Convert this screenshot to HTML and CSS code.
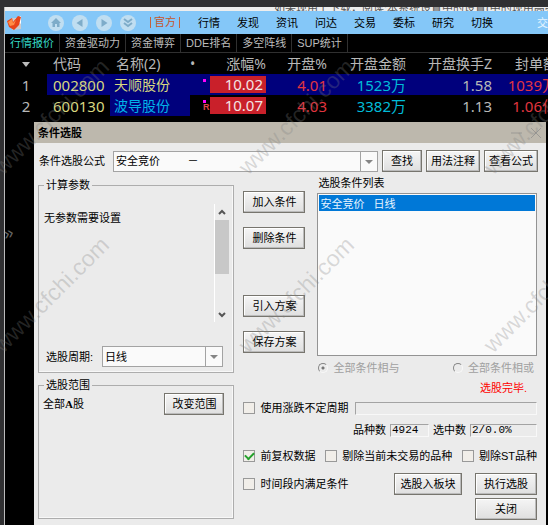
FILE: index.html
```html
<!DOCTYPE html>
<html lang="zh-CN">
<head>
<meta charset="utf-8">
<meta name="viewport" content="width=device-width, initial-scale=1">
<title>条件选股</title>
<link rel="stylesheet" href="styles.css">
</head>
<body>
<main class="app">
  <div class="notice">如果现用上下载，阅读:本系统设置中的设置(中的现用高亮显示)即能</div>

  <header class="toolbar">
    <svg class="logo" viewBox="0 0 15 16" aria-hidden="true">
      <path d="M4 3h10v11l-9 1z" fill="#cfc9ca"/>
      <path d="M8 4l6-3v8z" fill="#fff"/>
      <path d="M0 6l5-3 1 4 5-6 3 1-2 8-5 5-5-3z" fill="#e8441a"/>
      <path d="M1 7l4-3 1 4 3-3-2 5-4 1z" fill="#ff8c45"/>
    </svg>
    <nav class="round-buttons">
      <button type="button" aria-label="首页"><svg viewBox="0 0 16 16"><path d="M3 8l5-5 5 5h-1.500v4h-2.500v-3h-2v3H4.500V8z" fill="#7eacc9"/></svg></button>
      <button type="button" aria-label="后退"><svg viewBox="0 0 16 16"><path d="M10.500 4v8L4.500 8z" fill="#7eacc9"/></svg></button>
      <button type="button" aria-label="前进"><svg viewBox="0 0 16 16"><path d="M5.500 4v8l6-4z" fill="#7eacc9"/></svg></button>
      <button type="button" aria-label="更多"><svg viewBox="0 0 16 16"><path d="M4 4l4 3 4-3M4 8l4 3 4-3" fill="none" stroke="#7eacc9" stroke-width="2"/></svg></button>
    </nav>
    <a class="official" href="#">官方</a>
    <nav class="menu">
      <a href="#">行情</a><a href="#">发现</a><a href="#">资讯</a><a href="#">问达</a><a href="#">交易</a><a href="#">委标</a><a href="#">研究</a><a href="#">切换</a>
    </nav>
    <span class="trade">交</span>
  </header>

  <nav class="tabs">
    <a class="active" href="#">行情报价</a><a href="#">资金驱动力</a><a href="#">资金博弈</a><a href="#">DDE排名</a><a href="#">多空阵线</a><a href="#">SUP统计</a>
  </nav>

  <div class="quotes-wrap">
    <table class="quotes">
      <colgroup><col class="c-index"><col class="c-code"><col class="c-name"><col class="c-mark"><col class="c-rise"><col class="c-open"><col class="c-amount"><col class="c-turn"><col class="c-seal"></colgroup>
      <thead>
        <tr><th class="center"><span class="triangle"></span></th><th class="left">代码</th><th class="left">名称(2)</th><th class="bullet">•</th><th>涨幅%</th><th>开盘%</th><th>开盘金额</th><th>开盘换手Z</th><th>封单额</th></tr>
      </thead>
      <tbody>
        <tr class="selected"><td class="index">1</td><td class="code">002800</td><td class="name">天顺股份</td><td class="mark"><i class="dot"></i></td><td class="rise"><span>10.02</span></td><td class="up">4.01</td><td class="amount">1523万</td><td>1.58</td><td class="up">1039万</td></tr>
        <tr><td class="index">2</td><td class="code">600130</td><td class="name marked">波导股份</td><td class="mark"><i class="dot"></i><b>R</b></td><td class="rise"><span>10.07</span></td><td class="up">4.03</td><td class="amount">3382万</td><td>1.13</td><td class="up">1.06亿</td></tr>
      </tbody>
    </table>
  </div>

  <section class="dialog" role="dialog" aria-labelledby="dialog-title">
    <div class="titlebar">
      <h1 id="dialog-title">条件选股</h1>
      <svg class="window-controls" viewBox="0 0 30 12" aria-hidden="true"><path d="M0 6h11M20 1l10 10M30 1l-10 10" fill="none" stroke="#9b9994"/></svg>
    </div>
    <form class="content">
      <div class="formula">
        <label for="formula">条件选股公式</label>
        <span class="select"><select id="formula"><option>安全竞价 &nbsp; &nbsp; &nbsp; &nbsp; －</option></select></span>
        <button class="btn" type="button">查找</button>
        <button class="btn" type="button">用法注释</button>
        <button class="btn" type="button">查看公式</button>
      </div>

      <div class="columns">
        <div class="left-column">
          <fieldset class="params">
            <legend>计算参数</legend>
            <div class="param-list">
              <p>无参数需要设置</p>
              <div class="scrollbar" aria-hidden="true">
                <svg viewBox="0 0 14 16"><path d="M4 10l3-3 3 3" fill="none" stroke="#555" stroke-width="2"/></svg>
                <span class="thumb"></span>
                <svg class="down" viewBox="0 0 14 16"><path d="M4 7l3 3 3-3" fill="none" stroke="#555" stroke-width="2"/></svg>
              </div>
            </div>
            <div class="period">
              <label for="period">选股周期:</label>
              <span class="select"><select id="period"><option>日线</option></select></span>
            </div>
          </fieldset>
          <fieldset class="range">
            <legend>选股范围</legend>
            <div class="range-row">
              <span>全部<b>A</b>股</span>
              <button class="btn" type="button">改变范围</button>
            </div>
          </fieldset>
        </div>

        <div class="right-column">
          <div class="conditions">
            <div class="actions">
              <button class="btn" type="button">加入条件</button>
              <button class="btn" type="button">删除条件</button>
              <button class="btn second-group" type="button">引入方案</button>
              <button class="btn" type="button">保存方案</button>
            </div>
            <div class="list-side">
              <label for="conditions">选股条件列表</label>
              <select id="conditions" size="8"><option class="chosen">安全竞价 &nbsp; 日线</option></select>
              <div class="radios">
                <label><input type="radio" name="join" checked disabled>全部条件相与</label>
                <label><input type="radio" name="join" disabled>全部条件相或</label>
              </div>
              <p class="status">选股完毕.</p>
            </div>
          </div>

          <div class="row uncertain">
            <label><input type="checkbox">使用涨跌不定周期</label>
            <input class="sunken" type="text" aria-label="不定周期" readonly>
          </div>
          <div class="row counts">
            <label for="total">品种数</label><input id="total" class="sunken total" type="text" value="4924" readonly>
            <label for="hits">选中数</label><input id="hits" class="sunken hits" type="text" value="2/0.0%" readonly>
          </div>
          <div class="row filters">
            <label><input type="checkbox" checked>前复权数据</label>
            <label><input type="checkbox">剔除当前未交易的品种</label>
            <label><input type="checkbox">剔除ST品种</label>
          </div>
          <div class="row run">
            <label><input type="checkbox">时间段内满足条件</label>
            <button class="btn to-block" type="button">选股入板块</button>
            <button class="btn wide" type="button">执行选股</button>
          </div>
          <div class="row close"><button class="btn wide" type="button">关闭</button></div>
        </div>
      </div>
    </form>
  </section>
</main>

<svg class="watermarks" aria-hidden="true">
  <g>
    <text transform="translate(3 176) rotate(-45)">www.cfchi.com</text>
    <text transform="translate(248 176) rotate(-45)">www.cfchi.com</text>
    <text transform="translate(493 176) rotate(-45)">www.cfchi.com</text>
    <text transform="translate(3 354) rotate(-45)">www.cfchi.com</text>
    <text transform="translate(248 354) rotate(-45)">www.cfchi.com</text>
    <text transform="translate(493 354) rotate(-45)">www.cfchi.com</text>
    <text class="chevrons" transform="translate(5 240) rotate(-15)">»</text>
  </g>
</svg>
</body>
</html>
```
FILE: styles.css
```css
* { box-sizing: border-box; }

body {
  margin: 0;
  padding: 7px 0 0 4px;
  min-height: 100vh;
  display: flex;
  background: #303032;
  font: 11px/14px "Liberation Sans", "Noto Sans CJK SC", sans-serif;
  color: #000;
  overflow: hidden;
}

button, input, select { font: inherit; color: inherit; }
a { color: inherit; text-decoration: none; white-space: nowrap; }
h1, p { margin: 0; }

.app {
  flex: 1;
  min-width: 0;
  display: flex;
  flex-direction: column;
  background: #000;
  border-left: 1px solid #bbb;
}

.notice {
  height: 4px;
  overflow: hidden;
  background: #ededed;
  color: #555;
  padding-left: 269px;
  line-height: 2px;
  white-space: nowrap;
}

/* Toolbar */
.toolbar {
  display: flex;
  align-items: center;
  height: 23px;
  background: #84c7f8;
  padding-left: 2px;
  overflow: hidden;
}
.logo { width: 15px; height: 16px; flex: none; }
.round-buttons { display: flex; gap: 8px; margin-left: 26px; }
.round-buttons button {
  width: 16px;
  height: 16px;
  padding: 0;
  border: 0;
  border-radius: 50%;
  background: #c0def1;
}
.round-buttons svg { display: block; }
.official {
  margin-left: 14px;
  padding: 0 3px;
  border: solid #c4633c;
  border-width: 0 1px;
  color: #c4562c;
  line-height: 11px;
}
.menu { display: flex; flex: 1; gap: 17px; margin-left: 18px; }
.trade { flex: none; width: 11px; color: #e6f5ff; }

/* Tabs */
.tabs {
  display: flex;
  height: 19px;
  border-bottom: 1px solid #303030;
  color: #bcbcbc;
  line-height: 18px;
}
.tabs a { padding: 0 5px; border-right: 1px solid #303030; }
.tabs .active { color: #35d9c6; }

/* Quotes */
.quotes-wrap { overflow: hidden; }
.quotes {
  width: calc(100% + 9px);
  table-layout: fixed;
  border-collapse: collapse;
  font: 15px/20px "Noto Sans", "Noto Sans CJK SC", sans-serif;
  color: #b8b8b8;
}
.quotes th, .quotes td { height: 21px; padding: 0; text-align: right; font-weight: 400; white-space: nowrap; }
.quotes th { font-size: 14px; }
.quotes .center, .quotes .index { text-align: center; }
.quotes .left, .quotes .code { text-align: left; padding-left: 6px; }
.quotes .bullet { text-align: left; }
.c-index { width: 42px; }
.c-code { width: 63px; }
.c-name { width: 80px; }
.c-mark { width: 20px; }
.c-rise { width: 56px; }
.c-open { width: 61px; }
.c-amount { width: 79px; }
.c-turn { width: 86px; }
.triangle { display: inline-block; border: 4px solid transparent; border-top: 5px solid #bbb; border-bottom: 0; vertical-align: middle; }
.quotes .code { color: #d8d880; }
.quotes .name { text-align: left; padding-left: 4px; font-size: 14px; color: #d8d880; }
.quotes .marked { background: #00007c; color: #00b4e8; }
.selected td:not(.index) { background: #00007c; }
.quotes .up { color: #e0353f; }
.quotes .amount { color: #00bcd8; }
.rise span { display: block; height: 17px; padding-right: 3px; background: #c9202a; color: #f4e4e4; line-height: 17px; }
.mark .dot { display: block; width: 3px; height: 3px; margin-left: 13px; background: #f0f; }
.mark b { display: block; padding-left: 13px; text-align: left; color: #e0484d; font: bold 9px/8px "Liberation Sans", sans-serif; }
.selected .mark .dot { margin-bottom: 8px; }

/* Dialog */
.dialog { flex: 1; margin: 6px 2px 0 29px; background: #ebebeb; }
.titlebar {
  display: flex;
  align-items: center;
  justify-content: space-between;
  height: 21px;
  padding: 0 5px 0 4px;
  background: #bdb8ad;
}
.titlebar h1 { font-size: 11px; line-height: 14px; }
.window-controls { width: 30px; height: 12px; }
.content { padding: 0 8px 7px 4px; }

.btn {
  height: 22px;
  padding: 0 3px;
  border: 1px solid #77756e;
  background: linear-gradient(#f5f5f5, #dfdfdf);
  box-shadow: inset -1px -1px #bbb, inset 1px 1px #fff;
  white-space: nowrap;
}
.formula { display: flex; align-items: center; gap: 4px; height: 35px; padding: 1px 0 0 1px; }
.formula label { flex: none; width: 70px; }
.formula .select { flex: 1; }
.formula .btn { width: 54px; }
.formula .select + .btn { width: 40px; }

.select { position: relative; display: block; height: 21px; }
.select select {
  width: 100%;
  height: 100%;
  padding: 0 18px 0 2px;
  border: 1px solid #a3a3a3;
  border-radius: 0;
  background: #fafafa;
  appearance: none;
}
.select::before {
  content: "";
  position: absolute;
  right: 17px;
  top: 1px;
  bottom: 1px;
  border-left: 1px solid #a3a3a3;
  pointer-events: none;
}
.select::after {
  content: "";
  position: absolute;
  right: 5px;
  top: 9px;
  border: 4px solid transparent;
  border-top-color: #858585;
  border-bottom: 0;
  pointer-events: none;
}

.columns { display: grid; grid-template-columns: 2fr 3fr; gap: 9px; }
.columns > * { min-width: 0; }

fieldset { min-width: 0; margin: 0; padding: 0; border: 1px solid #adadad; box-shadow: inset -1px -1px #f8f8f8; }
legend { margin-left: 5px; padding: 0 2px; line-height: 14px; }
.params { height: 195px; }
.param-list { display: flex; justify-content: space-between; margin-top: 12px; padding: 0 4px 0 5px; }
.param-list p { padding-top: 7px; }
.scrollbar { display: flex; flex-direction: column; width: 15px; height: 118px; border-left: 1px solid #fff; }
.scrollbar svg { display: block; width: 14px; height: 16px; }
.thumb { height: 54px; background: #c8c8c8; }
.scrollbar .down { margin-top: auto; }
.period { display: flex; align-items: center; margin-top: 24px; padding: 0 10px 0 7px; }
.period label { flex: none; width: 56px; }
.period .select { flex: 1; }
.range { height: 141px; margin-top: 5px; }
.range-row { display: flex; justify-content: space-between; align-items: center; padding: 1px 9px 0 4px; }
.range-row b { font-family: "Liberation Serif", serif; }
.range-row .btn { width: 60px; }

.conditions { display: flex; gap: 12px; }
.actions { display: flex; flex-direction: column; gap: 14px; width: 62px; padding-top: 13px; }
.actions .second-group { margin-top: 32px; }
.list-side { flex: 1; min-width: 0; padding-right: 1px; }
.list-side > label { display: block; padding-left: 1px; height: 15px; line-height: 11px; }
.list-side select {
  display: block;
  width: 100%;
  height: 163px;
  padding: 1px;
  border: 1px solid #939393;
  border-radius: 0;
  background: #fafafa;
  overflow: hidden;
}
.list-side option { min-height: 15px; padding: 0 1px; line-height: 15px; }
.chosen { background: #0078d7; color: #e8f4ff; }
.radios { display: flex; justify-content: space-between; margin-top: 5px; padding: 0 3px 0 1px; color: #a0a0a0; }
.radios label, .row label { display: flex; align-items: center; gap: 5px; white-space: nowrap; }
.radios input {
  width: 10px;
  height: 10px;
  margin: 0;
  border: 1px solid;
  border-color: #858585 #f8f8f8 #f8f8f8 #858585;
  border-radius: 50%;
  appearance: none;
}
.radios input:checked { background: radial-gradient(circle, #777 0 1px, transparent 2px); }
.status { padding: 6px 10px 0 0; text-align: right; color: #f00; }

.row { display: flex; align-items: center; padding-right: 1px; }
.row input[type="checkbox"] {
  display: grid;
  place-items: center;
  width: 12px;
  height: 12px;
  margin: 0;
  border: 1px solid #999;
  background: #f1eee9;
  appearance: none;
}
.row input:checked::after {
  content: "";
  width: 7px;
  height: 4px;
  margin-bottom: 2px;
  border: solid #24a12c;
  border-width: 0 0 2px 2px;
  transform: rotate(-45deg);
}
.sunken {
  min-width: 0;
  height: 13px;
  padding: 0 1px;
  border: 1px solid;
  border-color: #a3a3a3 #f8f8f8 #f8f8f8 #a3a3a3;
  border-radius: 0;
  background: #ebebeb;
  font: 11px/11px "Liberation Mono", monospace;
}
.uncertain { gap: 7px; height: 26px; }
.uncertain .sunken { flex: 1; }
.counts { justify-content: flex-end; gap: 4px; height: 18px; }
.total { width: 39px; }
.hits { width: 67px; }
.filters { justify-content: space-between; height: 33px; }
.run { gap: 13px; height: 24px; }
.run label { margin-right: auto; }
.to-block { width: 68px; }
.wide { width: 62px; }
.close { justify-content: flex-end; height: 26px; }

/* Watermark overlay */
.watermarks { position: absolute; left: 0; top: 0; width: 100%; height: 100%; pointer-events: none; }
.watermarks text { fill: #808080; fill-opacity: 0.28; font: 23px "Liberation Sans", sans-serif; }
.watermarks .chevrons { font-size: 18px; fill: #aaa; fill-opacity: 0.6; }
```
